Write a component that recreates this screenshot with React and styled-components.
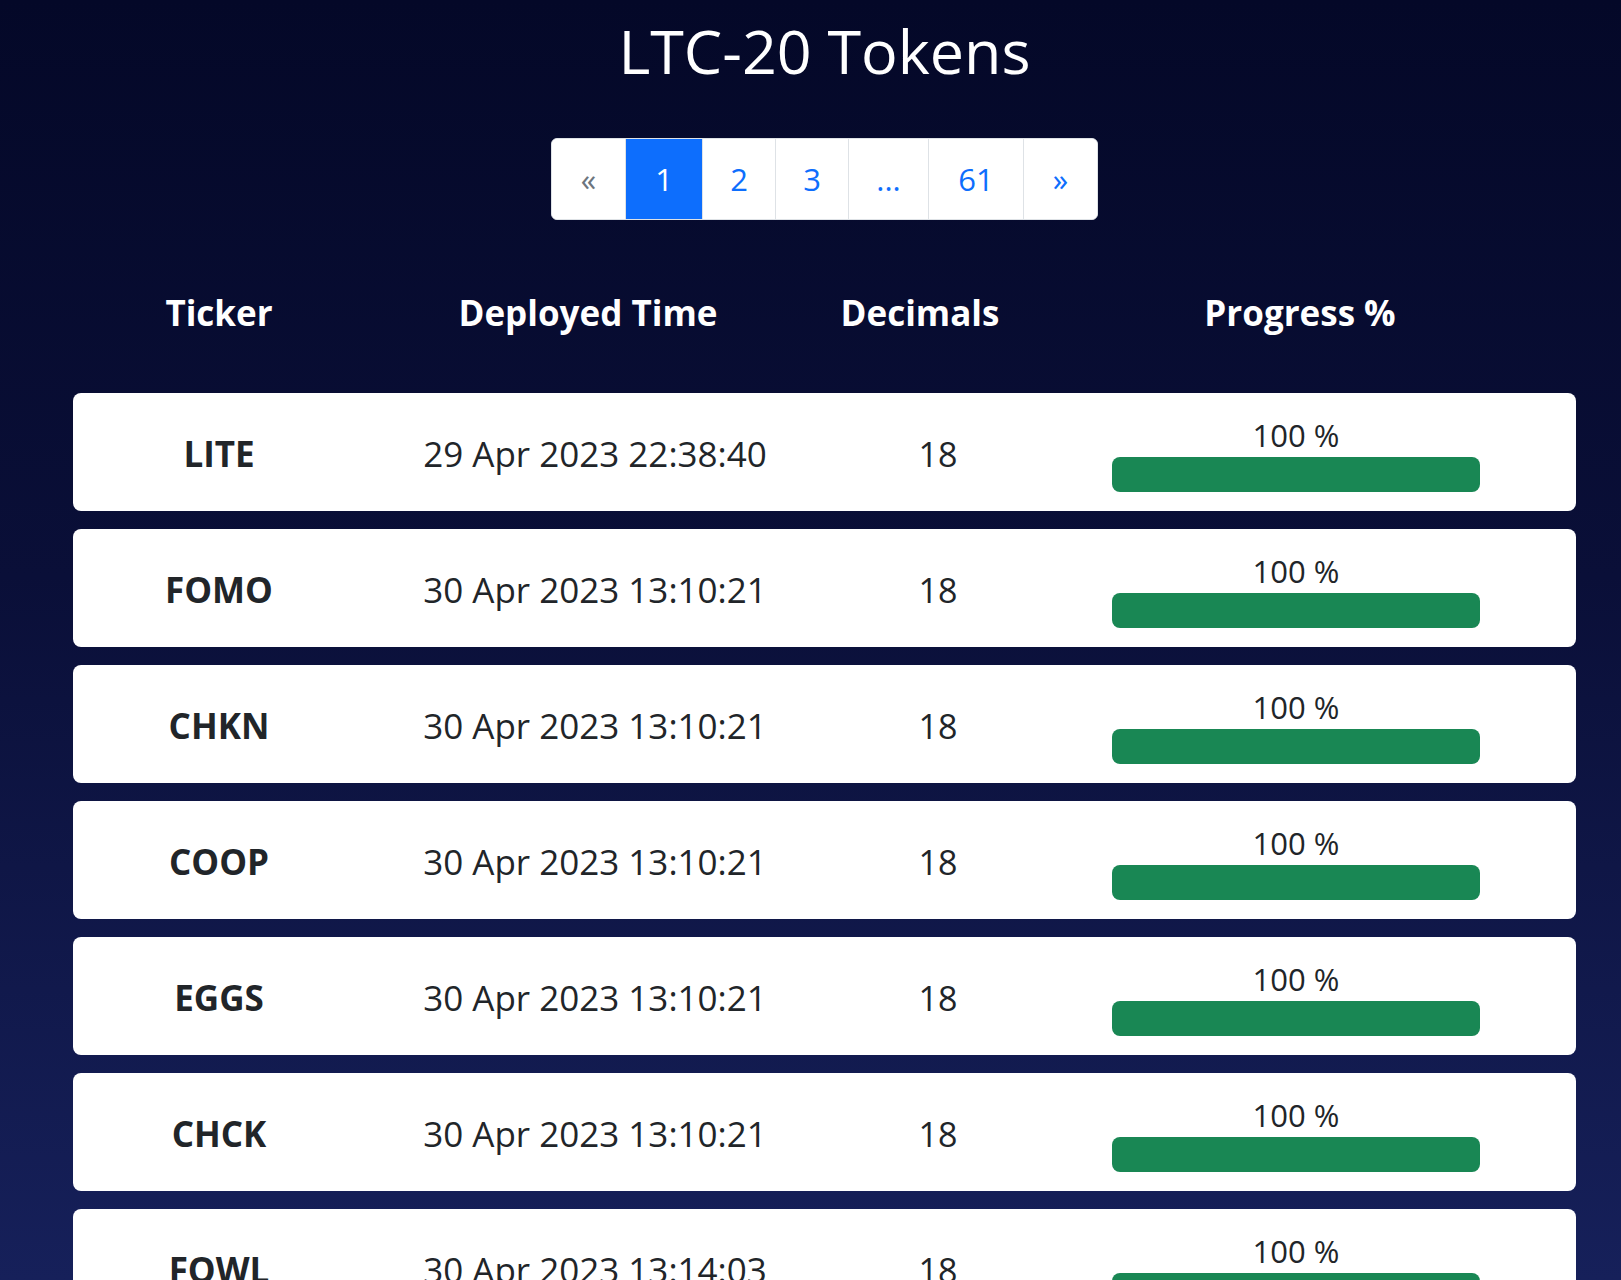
import React from 'react';
import styled, { createGlobalStyle } from 'styled-components';

const GlobalStyle = createGlobalStyle`
  html {
    background: linear-gradient(to bottom, #040828 0%, #0a0f38 45%, #16205a 100%) fixed;
    min-height: 100%;
  }
  body {
    margin: 0;
    font-family: "Open Sans", "Noto Sans", sans-serif;
    color: #212529;
  }
`;

const Page = styled.main`
  padding: 15px 45px 0 73px;
  display: flex;
  flex-direction: column;
  align-items: stretch;
`;

const Title = styled.h1`
  margin: 0;
  text-align: center;
  color: #fff;
  font-size: 61px;
  font-weight: 400;
  line-height: 72px;
`;

const Pager = styled.nav`
  align-self: center;
  display: flex;
  margin-top: 51px;
  height: 82px;
  background: #fff;
  border: 1px solid #dee2e6;
  border-radius: 6px;
  overflow: hidden;
  box-sizing: border-box;
`;

const PageItem = styled.a`
  display: flex;
  align-items: center;
  justify-content: center;
  min-width: ${p => p.$w}px;
  box-sizing: border-box;
  font-size: 31px;
  color: ${p => (p.$active ? '#fff' : p.$disabled ? '#6c757d' : '#0d6efd')};
  background: ${p => (p.$active ? '#0d6efd' : '#fff')};
  border-left: ${p => (p.$first ? 'none' : '1px solid #dee2e6')};
  text-decoration: none;
  cursor: pointer;
`;

const HeadRow = styled.div`
  display: grid;
  grid-template-columns: 292px 446px 218px 542px 1fr;
  margin-top: 69px;
  color: #fff;
  font-size: 35px;
  font-weight: 700;
  line-height: 48px;
  text-align: center;
`;

const List = styled.div`
  display: flex;
  flex-direction: column;
  gap: 18px;
  margin-top: 56px;
`;

const Card = styled.div`
  display: grid;
  grid-template-columns: 292px 460px 226px 490px 1fr;
  align-items: center;
  height: 118px;
  background: #fff;
  border-radius: 8px;
  text-align: center;
`;

const Ticker = styled.div`
  font-size: 35px;
  font-weight: 700;
  padding-top: 3px;
`;

const Cell = styled.div`
  font-size: ${p => p.$size || 35}px;
  padding-top: 3px;
  white-space: nowrap;
`;

const ProgressCell = styled.div`
  display: flex;
  flex-direction: column;
  align-items: center;
  padding-top: 4px;
`;

const Percent = styled.span`
  font-size: 31px;
  line-height: 36px;
`;

const Track = styled.div`
  width: 368px;
  height: 35px;
  margin-top: 4px;
  background: #e9ecef;
  border-radius: 8px;
  overflow: hidden;
`;

const Fill = styled.div`
  height: 100%;
  background: #198754;
`;

const pages = [
  { label: '«', w: 73, disabled: true },
  { label: '1', w: 77, active: true },
  { label: '2', w: 73 },
  { label: '3', w: 73 },
  { label: '...', w: 80 },
  { label: '61', w: 95 },
  { label: '»', w: 74 },
];

const tokens = [
  { tick: 'LITE', time: '29 Apr 2023 22:38:40', dec: 18, progress: 100 },
  { tick: 'FOMO', time: '30 Apr 2023 13:10:21', dec: 18, progress: 100 },
  { tick: 'CHKN', time: '30 Apr 2023 13:10:21', dec: 18, progress: 100 },
  { tick: 'COOP', time: '30 Apr 2023 13:10:21', dec: 18, progress: 100 },
  { tick: 'EGGS', time: '30 Apr 2023 13:10:21', dec: 18, progress: 100 },
  { tick: 'CHCK', time: '30 Apr 2023 13:10:21', dec: 18, progress: 100 },
  { tick: 'FOWL', time: '30 Apr 2023 13:14:03', dec: 18, progress: 100 },
];

const App = () => (
  <>
    <GlobalStyle />
    <Page>
      <Title>LTC-20 Tokens</Title>
      <Pager>
        {pages.map((p, i) => (
          <PageItem key={i} $w={p.w} $first={i === 0} $active={p.active} $disabled={p.disabled}>
            {p.label}
          </PageItem>
        ))}
      </Pager>
      <HeadRow>
        <div>Ticker</div>
        <div>Deployed Time</div>
        <div>Decimals</div>
        <div>Progress %</div>
      </HeadRow>
      <List>
        {tokens.map(t => (
          <Card key={t.tick}>
            <Ticker>{t.tick}</Ticker>
            <Cell>{t.time}</Cell>
            <Cell $size={34}>{t.dec}</Cell>
            <ProgressCell>
              <Percent>{t.progress} %</Percent>
              <Track>
                <Fill style={{ width: `${t.progress}%` }} />
              </Track>
            </ProgressCell>
          </Card>
        ))}
      </List>
    </Page>
  </>
);

export default App;
